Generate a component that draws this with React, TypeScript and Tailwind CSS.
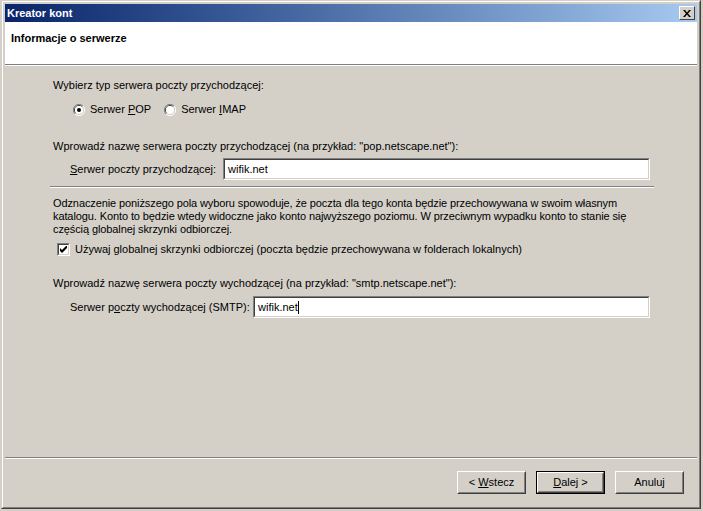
const ui = "font-['Liberation_Sans',Arial,sans-serif] text-[11px] leading-[13px] text-black";

function Field({ value, caret }: { value: string; caret?: boolean }) {
  return (
    <div className="flex-1 h-[22px] border border-t-[#808080] border-l-[#808080] border-r-white border-b-white">
      <div className="h-full border border-t-[#404040] border-l-[#404040] border-r-[#D4D0C8] border-b-[#D4D0C8] bg-white flex items-center pl-[3px]">
        <span>{value}</span>
        {caret && <span className="w-px h-[13px] bg-black" />}
      </div>
    </div>
  );
}

function Radio({ checked }: { checked?: boolean }) {
  return (
    <svg width="12" height="12" viewBox="0 0 12 12" className="shrink-0">
      <path d="M10 2 A5.5 5.5 0 0 0 2 10" fill="none" stroke="#808080" />
      <path d="M9.2 2.8 A4.5 4.5 0 0 0 2.8 9.2" fill="none" stroke="#404040" />
      <path d="M2 10 A5.5 5.5 0 0 0 10 2" fill="none" stroke="#ffffff" />
      <path d="M2.8 9.2 A4.5 4.5 0 0 0 9.2 2.8" fill="none" stroke="#D4D0C8" />
      <circle cx="6" cy="6" r="4" fill="#ffffff" />
      {checked && <circle cx="6" cy="6" r="2" fill="#000000" />}
    </svg>
  );
}

function Button({ children, def }: { children: React.ReactNode; def?: boolean }) {
  const inner = (
    <div className="w-full h-full border border-t-white border-l-white border-r-[#404040] border-b-[#404040]">
      <div className="w-full h-full border border-t-[#D4D0C8] border-l-[#D4D0C8] border-r-[#808080] border-b-[#808080] flex items-center justify-center">
        {children}
      </div>
    </div>
  );
  return (
    <div className={`w-[69px] h-[23px] ${def ? "border border-black" : ""}`}>{inner}</div>
  );
}

export default function App() {
  return (
    <div className={`${ui} w-[703px] h-[511px] bg-[#D4D0C8] overflow-hidden`}>
      {/* window */}
      <div className="ml-px w-[700px] h-[509px] border border-t-[#D4D0C8] border-l-[#D4D0C8] border-r-[#404040] border-b-[#404040]">
        <div className="w-full h-full border border-t-white border-l-white border-r-[#808080] border-b-[#808080] p-[2px] flex flex-col">
          {/* title bar */}
          <div className="h-[18px] bg-gradient-to-r from-[#0A246A] to-[#A6CAF0] flex items-center justify-between pl-[2px] pr-[2px]">
            <span className="text-white font-bold">Kreator kont</span>
            <div className="w-[16px] h-[14px] bg-[#D4D0C8] border border-t-white border-l-white border-r-[#404040] border-b-[#404040] flex items-center justify-center">
              <svg width="8" height="7" viewBox="0 0 8 7">
                <path d="M0 0h2l2 2.5L6 0h2L5 3.5 8 7H6L4 4.5 2 7H0l3-3.5z" fill="#000" />
              </svg>
            </div>
          </div>

          {/* header */}
          <div className="h-[42px] bg-white pl-[6px] pt-[10px]">
            <span className="font-bold">Informacje o serwerze</span>
          </div>
          <div className="h-px bg-[#808080]" />
          <div className="h-px bg-white" />

          {/* body */}
          <div className="flex-1 flex flex-col pl-[48px] pr-[47px] pt-[13px]">
            <div>Wybierz typ serwera poczty przychodzącej:</div>
            <div className="flex items-center mt-[11px] ml-[20px]">
              <Radio checked />
              <span className="ml-[5px]">
                Serwer <span className="underline">P</span>OP
              </span>
              <span className="ml-[13px]">
                <Radio />
              </span>
              <span className="ml-[5px]">
                Serwer <span className="underline">I</span>MAP
              </span>
            </div>

            <div className="mt-[24px]">
              Wprowadź nazwę serwera poczty przychodzącej (na przykład: "pop.netscape.net"):
            </div>
            <div className="flex items-center mt-[5px] ml-[17px]">
              <span className="w-[153px] shrink-0">
                <span className="underline">S</span>erwer poczty przychodzącej:
              </span>
              <Field value="wifik.net" />
            </div>

            <div className="mt-[6px] -ml-[3px] -mr-[4px]">
              <div className="h-px bg-[#808080]" />
              <div className="h-px bg-white" />
            </div>

            <div className="mt-[9px] tracking-[-0.1px]">
              Odznaczenie poniższego pola wyboru spowoduje, że poczta dla tego konta będzie przechowywana w swoim własnym
              <br />
              katalogu. Konto to będzie wtedy widoczne jako konto najwyższego poziomu. W przeciwnym wypadku konto to stanie się
              <br />
              częścią globalnej skrzynki odbiorczej.
            </div>
            <div className="flex items-center mt-[7px] ml-[4px]">
              <div className="w-[13px] h-[13px] border border-t-[#808080] border-l-[#808080] border-r-white border-b-white">
                <div className="w-full h-full border border-t-[#404040] border-l-[#404040] border-r-[#D4D0C8] border-b-[#D4D0C8] bg-white flex items-center justify-center">
                  <svg width="7" height="7" viewBox="0 0 7 7">
                    <path d="M0 2v3l2 2 5-5V-1L2 4z" fill="#000" />
                  </svg>
                </div>
              </div>
              <span className="ml-[5px]">
                Używaj globalnej skrzynki odbiorczej (poczta będzie przechowywana w folderach lokalnych)
              </span>
            </div>

            <div className="mt-[21px]">
              Wprowadź nazwę serwera poczty wychodzącej (na przykład: "smtp.netscape.net"):
            </div>
            <div className="flex items-center mt-[6px] ml-[17px]">
              <span className="w-[183px] shrink-0">
                Serwer p<span className="underline">o</span>czty wychodzącej (SMTP):
              </span>
              <Field value="wifik.net" caret />
            </div>
          </div>

          {/* footer */}
          <div className="h-px bg-[#808080]" />
          <div className="h-px bg-white" />
          <div className="h-[46px] flex justify-end items-start pt-[12px] pr-[13px] gap-[10px]">
            <Button>
              &lt;&nbsp;<span className="underline">W</span>stecz
            </Button>
            <Button def>
              <span className="underline">D</span>alej &gt;
            </Button>
            <Button>Anuluj</Button>
          </div>
        </div>
      </div>
    </div>
  );
}
